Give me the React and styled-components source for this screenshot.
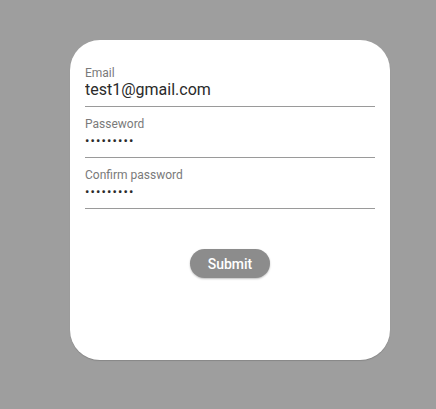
import React from "react";
import styled, { createGlobalStyle } from "styled-components";

const GlobalStyle = createGlobalStyle`
  html, body {
    margin: 0;
    padding: 0;
    background: #9e9e9e;
    font-family: Roboto, "Liberation Sans", Arial, sans-serif;
  }
`;

const Page = styled.div`
  width: 436px;
  height: 409px;
  padding: 40px 0 0 70px;
  box-sizing: border-box;
`;

const Card = styled.form`
  width: 320px;
  height: 320px;
  box-sizing: border-box;
  background: #ffffff;
  border-radius: 30px;
  padding: 26px 15px 0 15px;
  display: flex;
  flex-direction: column;
  box-shadow: 0 1px 1px rgba(0, 0, 0, 0.15);
`;

const Field = styled.div`
  display: flex;
  flex-direction: column;
  border-bottom: 1px solid #9a9a9a;
  margin-bottom: 10px;
`;

const Label = styled.label`
  font-size: 12px;
  line-height: 14px;
  color: #7a7a7a;
`;

const Input = styled.input`
  border: none;
  outline: none;
  padding: 0 0 6px 0;
  margin: 0;
  font-family: Roboto, "Liberation Sans", Arial, sans-serif;
  font-size: ${({ type }) => (type === "password" ? "13px" : "16px")};
  line-height: 20px;
  height: 20px;
  color: #2a2a2a;
  background: transparent;
  letter-spacing: ${({ type }) => (type === "password" ? "1.1px" : "0")};
`;

const Actions = styled.div`
  display: flex;
  justify-content: center;
  margin-top: 30px;
`;

const Button = styled.button`
  width: 80px;
  height: 29px;
  border: none;
  border-radius: 15px;
  background: #8c8c8c;
  color: #ffffff;
  font-family: Roboto, "Liberation Sans", Arial, sans-serif;
  font-size: 14px;
  font-weight: 500;
  box-shadow: 0 1px 2px rgba(0, 0, 0, 0.25);
  cursor: pointer;
`;

const fields = [
  { id: "email", label: "Email", type: "text", value: "test1@gmail.com" },
  { id: "password", label: "Passeword", type: "password", value: "123456789" },
  { id: "confirm", label: "Confirm password", type: "password", value: "123456789" },
];

const App = () => {
  return (
    <Page>
      <GlobalStyle />
      <Card onSubmit={(e) => e.preventDefault()}>
        {fields.map((f) => (
          <Field key={f.id}>
            <Label htmlFor={f.id}>{f.label}</Label>
            <Input id={f.id} type={f.type} defaultValue={f.value} />
          </Field>
        ))}
        <Actions>
          <Button type="submit">Submit</Button>
        </Actions>
      </Card>
    </Page>
  );
};

export default App;
